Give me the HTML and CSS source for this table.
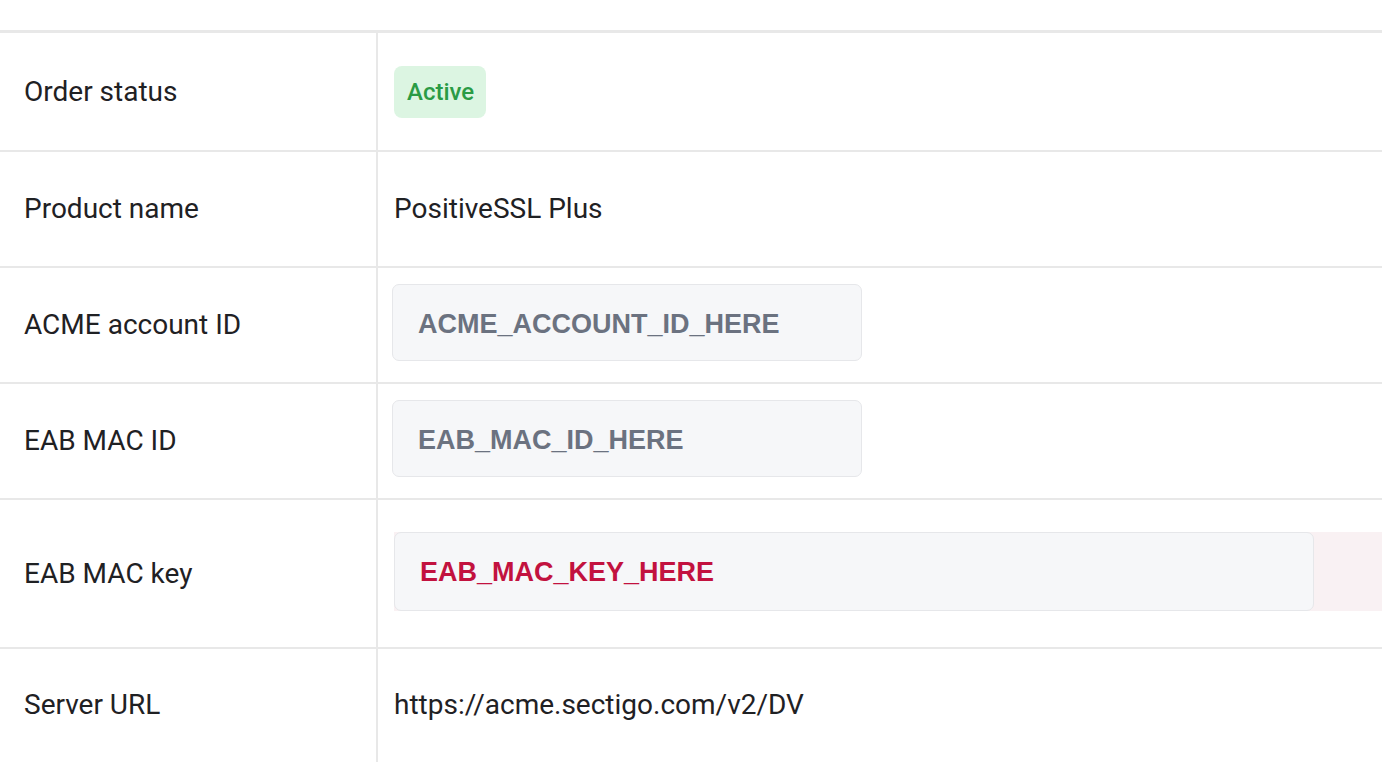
FILE: index.html
```html
<!DOCTYPE html>
<html lang="en">
<head>
<meta charset="utf-8">
<title>Order details</title>
<link rel="stylesheet" href="styles.css">
</head>
<body>
<div class="page">
  <div class="details">
    <div class="row row-status">
      <div class="label">Order status</div>
      <div class="value"><span class="badge">Active</span></div>
    </div>
    <div class="row">
      <div class="label">Product name</div>
      <div class="value">PositiveSSL Plus</div>
    </div>
    <div class="row">
      <div class="label">ACME account ID</div>
      <div class="value value-code"><div class="codebox">ACME_ACCOUNT_ID_HERE</div></div>
    </div>
    <div class="row">
      <div class="label">EAB MAC ID</div>
      <div class="value value-code"><div class="codebox">EAB_MAC_ID_HERE</div></div>
    </div>
    <div class="row row-key">
      <div class="label">EAB MAC key</div>
      <div class="value value-key">
        <div class="keywrap">
          <div class="keybox"><code class="key">EAB_MAC_KEY_HERE</code></div>
          <div class="keytail"></div>
        </div>
      </div>
    </div>
    <div class="row row-last">
      <div class="label">Server URL</div>
      <div class="value">https://acme.sectigo.com/v2/DV</div>
    </div>
  </div>
</div>
</body>
</html>
```

FILE: styles.css
```css
* { box-sizing: border-box; }
html, body { margin: 0; padding: 0; background: #fff; }
body {
  font-family: Roboto, "Noto Sans", Arial, sans-serif;
  color: #1f2124;
  overflow: hidden;
}
.page { padding-top: 30px; width: 1382px; height: 762px; overflow: hidden; }
.details { border-top: 3px solid #e8e8e8; }
.row {
  display: flex;
  height: 116px;
  border-bottom: 2px solid #e8e8e8;
}
.row-status { height: 119px; }
.row-key { height: 149px; }
.row-last { height: 200px; border-bottom: none; }
.label {
  width: 378px;
  flex: none;
  border-right: 2px solid #e8e8e8;
  padding-left: 24px;
  display: flex;
  align-items: center;
  font-size: 28px;
  line-height: 34px;
}
.row-last .label, .row-last .value { align-items: flex-start; padding-top: 39px; }
.value {
  flex: 1;
  display: flex;
  align-items: center;
  padding-left: 16px;
  font-size: 28px;
  line-height: 34px;
  min-width: 0;
}
.value-code { padding-bottom: 6px; }
.badge {
  display: inline-block;
  background: #dcf5e2;
  color: #2a9b45;
  font-weight: 500;
  font-size: 24px;
  line-height: 28px;
  padding: 12px 12px 12px 13px;
  border-radius: 8px;
}
.codebox {
  width: 470px;
  height: 77px;
  margin-left: -2px;
  display: flex;
  align-items: center;
  padding: 4px 25px 0;
  background: #f6f7f9;
  border: 1px solid #e6e7ea;
  border-radius: 7px;
  font-family: "Liberation Sans", Arial, sans-serif;
  font-weight: bold;
  font-size: 27px;
  color: #6b7280;
}
.value-key { padding-left: 16px; padding-bottom: 4px; }
.keywrap {
  flex: 1;
  display: flex;
  height: 79px;
  background: #f9f1f3;
}
.keybox {
  width: 920px;
  flex: none;
  display: flex;
  align-items: center;
  padding: 0 25px;
  background: #f6f7f9;
  border: 1px solid #e6e7ea;
  border-radius: 7px;
}
.key {
  font-family: "Liberation Sans", Arial, sans-serif;
  font-weight: bold;
  font-size: 27px;
  color: #c2123f;
}
.keytail { flex: 1; }
```
